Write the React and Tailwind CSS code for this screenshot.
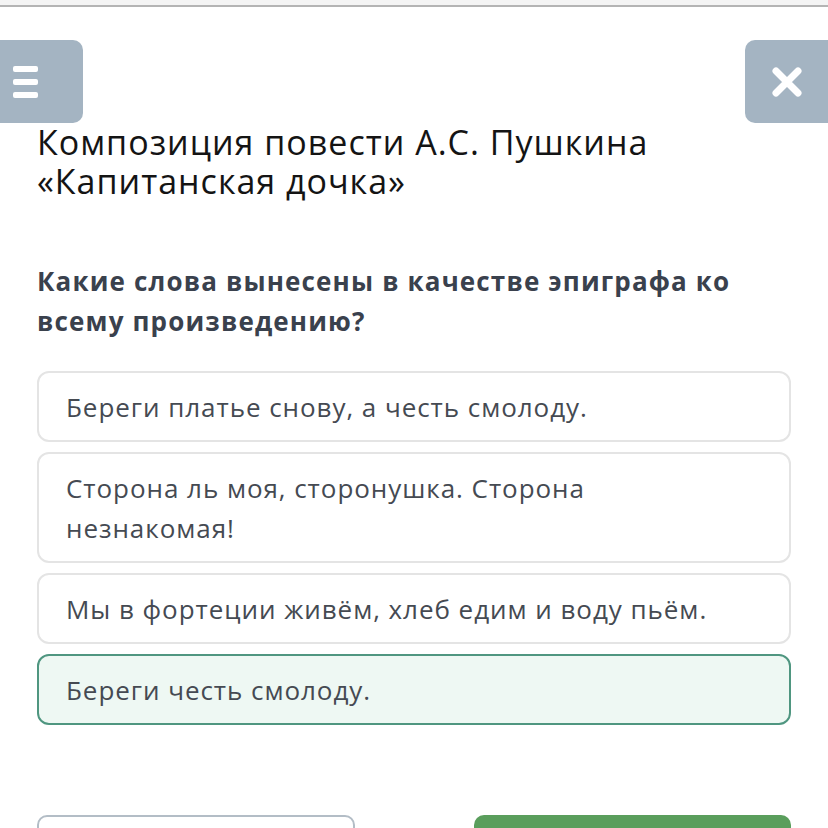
const options = [
  { id: 1, text: "Береги платье снову, а честь смолоду." },
  { id: 2, text: "Сторона ль моя, сторонушка. Сторона незнакомая!" },
  { id: 3, text: "Мы в фортеции живём, хлеб едим и воду пьём." },
  { id: 4, text: "Береги честь смолоду.", selected: true },
];

export default function App() {
  return (
    <div className="w-[828px] h-[828px] overflow-hidden bg-white font-['Open_Sans',sans-serif]">
      {/* верхняя полоска */}
      <div className="h-[7px] bg-[#f4f4f4] border-b-2 border-[#b4b4b4]" />

      {/* кнопки меню и закрыть */}
      <div className="flex justify-between mt-[33px]">
        <div className="w-[83px] h-[83px] bg-[#a4b4c2] rounded-r-[10px] flex flex-col justify-center pl-[13px] gap-[7px]">
          <span className="block w-[25px] h-[6px] bg-white rounded-[2px]" />
          <span className="block w-[25px] h-[6px] bg-white rounded-[2px]" />
          <span className="block w-[25px] h-[6px] bg-white rounded-[2px]" />
        </div>
        <div className="w-[83px] h-[83px] bg-[#a4b4c2] rounded-l-[10px] flex items-center justify-center">
          <svg width="32" height="32" viewBox="0 0 32 32">
            <path d="M5 5 L27 27 M27 5 L5 27" stroke="white" strokeWidth="7" strokeLinecap="round" />
          </svg>
        </div>
      </div>

      <div className="px-[37px]">
        <h1 className="mt-0 text-[34px] leading-[39px] tracking-[1px] text-[#141414] font-normal">
          Композиция повести А.С. Пушкина «Капитанская дочка»
        </h1>

        <p className="mt-[60px] text-[26px] leading-[40px] tracking-[1.15px] font-bold text-[#3a414d]">
          Какие слова вынесены в качестве эпиграфа ко всему произведению?
        </p>

        <div className="mt-[30px] flex flex-col gap-[10px]">
          {options.map((o) => (
            <div
              key={o.id}
              className={
                o.selected
                  ? "border-2 border-[#4f9680] bg-[#eef8f3] rounded-[12px] py-[13.5px] pl-[27px] pr-[28px] text-[26px] leading-[40px] tracking-[0.95px] text-[#454a52]"
                  : "border-2 border-[#e4e4e4] bg-white rounded-[12px] py-[13.5px] pl-[27px] pr-[28px] text-[26px] leading-[40px] tracking-[0.95px] text-[#454a52]"
              }
            >
              {o.text}
            </div>
          ))}
        </div>

        <div className="mt-[90px] flex justify-between">
          <div className="w-[318px] h-[60px] border-2 border-[#b3bdc6] rounded-[10px] bg-white" />
          <div className="w-[317px] h-[60px] bg-[#5a9e5c] rounded-[10px]" />
        </div>
      </div>
    </div>
  );
}
